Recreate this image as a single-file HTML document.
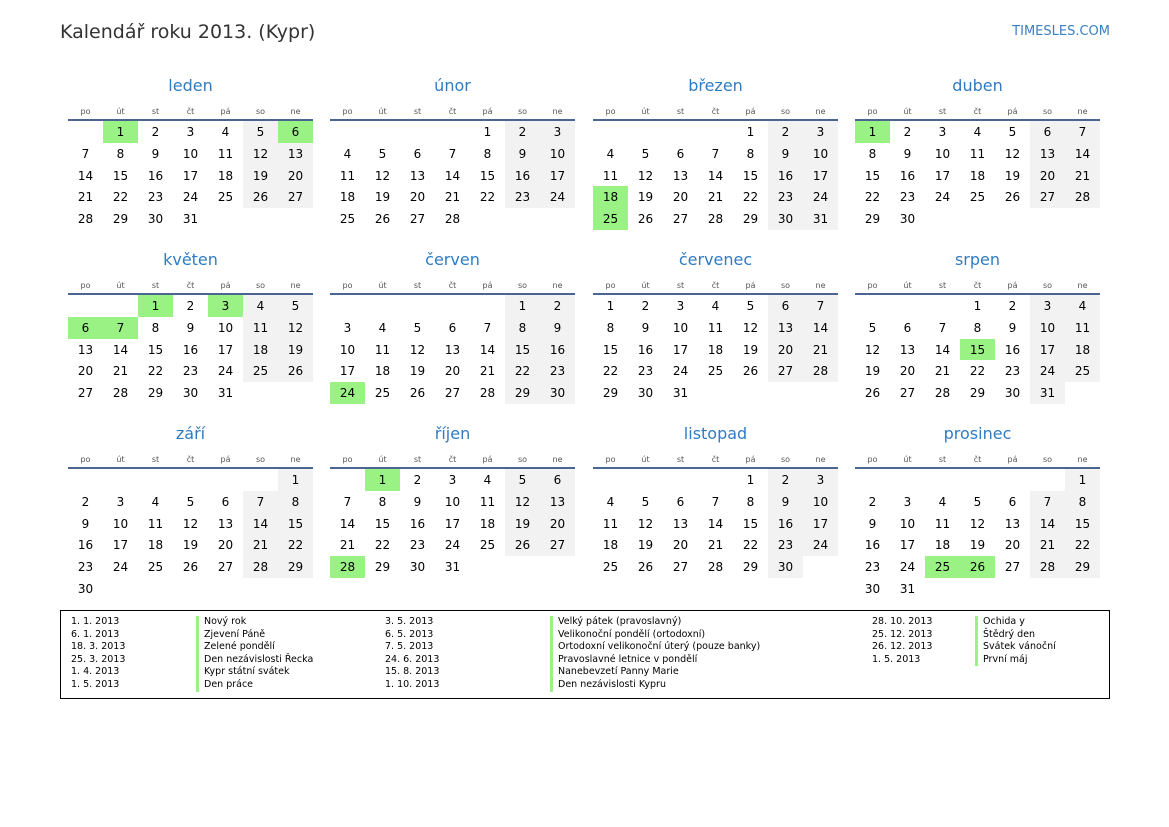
<!DOCTYPE html>
<html><head><meta charset="utf-8"><style>
*{margin:0;padding:0;box-sizing:border-box}
body{width:1169px;height:827px;background:#fff;font-family:"DejaVu Sans","Liberation Sans",sans-serif;position:relative;overflow:hidden;color:#000}
i{font-style:normal}
.t{position:absolute;left:60px;top:21px;font-size:19px;color:#333}
.s{position:absolute;right:59px;top:24px;font-size:13px;color:#3a7fc0}
.m{position:absolute;width:245px}
.m h2{font-weight:normal;font-size:16px;color:#2f7bc4;text-align:center;height:26px;line-height:26px;margin-top:-12px}
.dn{display:grid;grid-template-columns:repeat(7,35px);font-size:8px;color:#555;text-align:center;line-height:14px;margin-top:6px;border-bottom:2px solid #4a6591;height:16px}
.g{display:grid;grid-template-columns:repeat(7,35px);grid-auto-rows:21.8px;font-size:12px;text-align:center;line-height:23px}
.w{background:#f2f2f2}
.h{background:#99f283}
.lg{position:absolute;left:60px;top:610px;width:1050px;height:89px;border:1.5px solid #000;font-size:9.5px}
.c{position:absolute;top:5px;line-height:12.6px}
.b{border-left:3px solid #99f283;padding-left:5px}
</style></head><body>
<div class="t">Kalendář roku 2013. (Kypr)</div>
<div class="s">TIMESLES.COM</div>

<div class="m" style="left:68px;top:85px"><h2>leden</h2><div class="dn"><i>po</i><i>út</i><i>st</i><i>čt</i><i>pá</i><i>so</i><i>ne</i></div><div class="g">
<i></i><i class="h">1</i><i>2</i><i>3</i><i>4</i><i class="w">5</i><i class="h">6</i>
<i>7</i><i>8</i><i>9</i><i>10</i><i>11</i><i class="w">12</i><i class="w">13</i>
<i>14</i><i>15</i><i>16</i><i>17</i><i>18</i><i class="w">19</i><i class="w">20</i>
<i>21</i><i>22</i><i>23</i><i>24</i><i>25</i><i class="w">26</i><i class="w">27</i>
<i>28</i><i>29</i><i>30</i><i>31</i></div></div>

<div class="m" style="left:330px;top:85px"><h2>únor</h2><div class="dn"><i>po</i><i>út</i><i>st</i><i>čt</i><i>pá</i><i>so</i><i>ne</i></div><div class="g">
<i></i><i></i><i></i><i></i><i>1</i><i class="w">2</i><i class="w">3</i>
<i>4</i><i>5</i><i>6</i><i>7</i><i>8</i><i class="w">9</i><i class="w">10</i>
<i>11</i><i>12</i><i>13</i><i>14</i><i>15</i><i class="w">16</i><i class="w">17</i>
<i>18</i><i>19</i><i>20</i><i>21</i><i>22</i><i class="w">23</i><i class="w">24</i>
<i>25</i><i>26</i><i>27</i><i>28</i></div></div>

<div class="m" style="left:593px;top:85px"><h2>březen</h2><div class="dn"><i>po</i><i>út</i><i>st</i><i>čt</i><i>pá</i><i>so</i><i>ne</i></div><div class="g">
<i></i><i></i><i></i><i></i><i>1</i><i class="w">2</i><i class="w">3</i>
<i>4</i><i>5</i><i>6</i><i>7</i><i>8</i><i class="w">9</i><i class="w">10</i>
<i>11</i><i>12</i><i>13</i><i>14</i><i>15</i><i class="w">16</i><i class="w">17</i>
<i class="h">18</i><i>19</i><i>20</i><i>21</i><i>22</i><i class="w">23</i><i class="w">24</i>
<i class="h">25</i><i>26</i><i>27</i><i>28</i><i>29</i><i class="w">30</i><i class="w">31</i></div></div>

<div class="m" style="left:855px;top:85px"><h2>duben</h2><div class="dn"><i>po</i><i>út</i><i>st</i><i>čt</i><i>pá</i><i>so</i><i>ne</i></div><div class="g">
<i class="h">1</i><i>2</i><i>3</i><i>4</i><i>5</i><i class="w">6</i><i class="w">7</i>
<i>8</i><i>9</i><i>10</i><i>11</i><i>12</i><i class="w">13</i><i class="w">14</i>
<i>15</i><i>16</i><i>17</i><i>18</i><i>19</i><i class="w">20</i><i class="w">21</i>
<i>22</i><i>23</i><i>24</i><i>25</i><i>26</i><i class="w">27</i><i class="w">28</i>
<i>29</i><i>30</i></div></div>

<div class="m" style="left:68px;top:259px"><h2>květen</h2><div class="dn"><i>po</i><i>út</i><i>st</i><i>čt</i><i>pá</i><i>so</i><i>ne</i></div><div class="g">
<i></i><i></i><i class="h">1</i><i>2</i><i class="h">3</i><i class="w">4</i><i class="w">5</i>
<i class="h">6</i><i class="h">7</i><i>8</i><i>9</i><i>10</i><i class="w">11</i><i class="w">12</i>
<i>13</i><i>14</i><i>15</i><i>16</i><i>17</i><i class="w">18</i><i class="w">19</i>
<i>20</i><i>21</i><i>22</i><i>23</i><i>24</i><i class="w">25</i><i class="w">26</i>
<i>27</i><i>28</i><i>29</i><i>30</i><i>31</i></div></div>

<div class="m" style="left:330px;top:259px"><h2>červen</h2><div class="dn"><i>po</i><i>út</i><i>st</i><i>čt</i><i>pá</i><i>so</i><i>ne</i></div><div class="g">
<i></i><i></i><i></i><i></i><i></i><i class="w">1</i><i class="w">2</i>
<i>3</i><i>4</i><i>5</i><i>6</i><i>7</i><i class="w">8</i><i class="w">9</i>
<i>10</i><i>11</i><i>12</i><i>13</i><i>14</i><i class="w">15</i><i class="w">16</i>
<i>17</i><i>18</i><i>19</i><i>20</i><i>21</i><i class="w">22</i><i class="w">23</i>
<i class="h">24</i><i>25</i><i>26</i><i>27</i><i>28</i><i class="w">29</i><i class="w">30</i></div></div>

<div class="m" style="left:593px;top:259px"><h2>červenec</h2><div class="dn"><i>po</i><i>út</i><i>st</i><i>čt</i><i>pá</i><i>so</i><i>ne</i></div><div class="g">
<i>1</i><i>2</i><i>3</i><i>4</i><i>5</i><i class="w">6</i><i class="w">7</i>
<i>8</i><i>9</i><i>10</i><i>11</i><i>12</i><i class="w">13</i><i class="w">14</i>
<i>15</i><i>16</i><i>17</i><i>18</i><i>19</i><i class="w">20</i><i class="w">21</i>
<i>22</i><i>23</i><i>24</i><i>25</i><i>26</i><i class="w">27</i><i class="w">28</i>
<i>29</i><i>30</i><i>31</i></div></div>

<div class="m" style="left:855px;top:259px"><h2>srpen</h2><div class="dn"><i>po</i><i>út</i><i>st</i><i>čt</i><i>pá</i><i>so</i><i>ne</i></div><div class="g">
<i></i><i></i><i></i><i>1</i><i>2</i><i class="w">3</i><i class="w">4</i>
<i>5</i><i>6</i><i>7</i><i>8</i><i>9</i><i class="w">10</i><i class="w">11</i>
<i>12</i><i>13</i><i>14</i><i class="h">15</i><i>16</i><i class="w">17</i><i class="w">18</i>
<i>19</i><i>20</i><i>21</i><i>22</i><i>23</i><i class="w">24</i><i class="w">25</i>
<i>26</i><i>27</i><i>28</i><i>29</i><i>30</i><i class="w">31</i></div></div>

<div class="m" style="left:68px;top:433px"><h2>září</h2><div class="dn"><i>po</i><i>út</i><i>st</i><i>čt</i><i>pá</i><i>so</i><i>ne</i></div><div class="g">
<i></i><i></i><i></i><i></i><i></i><i></i><i class="w">1</i>
<i>2</i><i>3</i><i>4</i><i>5</i><i>6</i><i class="w">7</i><i class="w">8</i>
<i>9</i><i>10</i><i>11</i><i>12</i><i>13</i><i class="w">14</i><i class="w">15</i>
<i>16</i><i>17</i><i>18</i><i>19</i><i>20</i><i class="w">21</i><i class="w">22</i>
<i>23</i><i>24</i><i>25</i><i>26</i><i>27</i><i class="w">28</i><i class="w">29</i>
<i>30</i></div></div>

<div class="m" style="left:330px;top:433px"><h2>říjen</h2><div class="dn"><i>po</i><i>út</i><i>st</i><i>čt</i><i>pá</i><i>so</i><i>ne</i></div><div class="g">
<i></i><i class="h">1</i><i>2</i><i>3</i><i>4</i><i class="w">5</i><i class="w">6</i>
<i>7</i><i>8</i><i>9</i><i>10</i><i>11</i><i class="w">12</i><i class="w">13</i>
<i>14</i><i>15</i><i>16</i><i>17</i><i>18</i><i class="w">19</i><i class="w">20</i>
<i>21</i><i>22</i><i>23</i><i>24</i><i>25</i><i class="w">26</i><i class="w">27</i>
<i class="h">28</i><i>29</i><i>30</i><i>31</i></div></div>

<div class="m" style="left:593px;top:433px"><h2>listopad</h2><div class="dn"><i>po</i><i>út</i><i>st</i><i>čt</i><i>pá</i><i>so</i><i>ne</i></div><div class="g">
<i></i><i></i><i></i><i></i><i>1</i><i class="w">2</i><i class="w">3</i>
<i>4</i><i>5</i><i>6</i><i>7</i><i>8</i><i class="w">9</i><i class="w">10</i>
<i>11</i><i>12</i><i>13</i><i>14</i><i>15</i><i class="w">16</i><i class="w">17</i>
<i>18</i><i>19</i><i>20</i><i>21</i><i>22</i><i class="w">23</i><i class="w">24</i>
<i>25</i><i>26</i><i>27</i><i>28</i><i>29</i><i class="w">30</i></div></div>

<div class="m" style="left:855px;top:433px"><h2>prosinec</h2><div class="dn"><i>po</i><i>út</i><i>st</i><i>čt</i><i>pá</i><i>so</i><i>ne</i></div><div class="g">
<i></i><i></i><i></i><i></i><i></i><i></i><i class="w">1</i>
<i>2</i><i>3</i><i>4</i><i>5</i><i>6</i><i class="w">7</i><i class="w">8</i>
<i>9</i><i>10</i><i>11</i><i>12</i><i>13</i><i class="w">14</i><i class="w">15</i>
<i>16</i><i>17</i><i>18</i><i>19</i><i>20</i><i class="w">21</i><i class="w">22</i>
<i>23</i><i>24</i><i class="h">25</i><i class="h">26</i><i>27</i><i class="w">28</i><i class="w">29</i>
<i>30</i><i>31</i></div></div>

<div class="lg">
<div class="c" style="left:10px">1. 1. 2013<br>6. 1. 2013<br>18. 3. 2013<br>25. 3. 2013<br>1. 4. 2013<br>1. 5. 2013</div>
<div class="c b" style="left:135px">Nový rok<br>Zjevení Páně<br>Zelené pondělí<br>Den nezávislosti Řecka<br>Kypr státní svátek<br>Den práce</div>
<div class="c" style="left:324px">3. 5. 2013<br>6. 5. 2013<br>7. 5. 2013<br>24. 6. 2013<br>15. 8. 2013<br>1. 10. 2013</div>
<div class="c b" style="left:489px">Velký pátek (pravoslavný)<br>Velikonoční pondělí (ortodoxní)<br>Ortodoxní velikonoční úterý (pouze banky)<br>Pravoslavné letnice v pondělí<br>Nanebevzetí Panny Marie<br>Den nezávislosti Kypru</div>
<div class="c" style="left:811px">28. 10. 2013<br>25. 12. 2013<br>26. 12. 2013<br>1. 5. 2013</div>
<div class="c b" style="left:914px">Ochida y<br>Štědrý den<br>Svátek vánoční<br>První máj</div>
</div>
</body></html>
